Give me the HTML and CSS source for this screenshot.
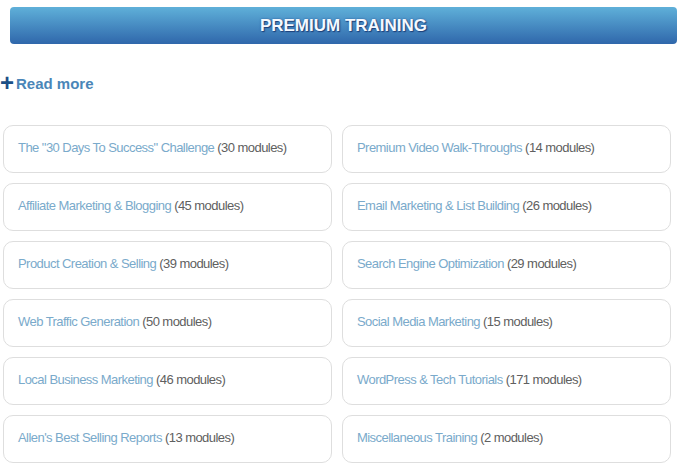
FILE: index.html
```html
<!doctype html>
<html lang="en">
    <head>
        <meta charset="UTF-8" />
        <title>Premium Training</title>
        <link rel="stylesheet" href="styles.css">
    </head>
    <body>
        <h2 class="banner">PREMIUM TRAINING</h2>

        <a class="read-more" href="#"><span class="plus">+</span>Read more</a>

        <!-- Course categories -->
        <ul class="courses">
            <li><a href="#">The "30 Days To Success" Challenge</a> (30 modules)</li>
            <li><a href="#">Premium Video Walk-Throughs</a> (14 modules)</li>
            <li><a href="#">Affiliate Marketing &amp; Blogging</a> (45 modules)</li>
            <li><a href="#">Email Marketing &amp; List Building</a> (26 modules)</li>
            <li><a href="#">Product Creation &amp; Selling</a> (39 modules)</li>
            <li><a href="#">Search Engine Optimization</a> (29 modules)</li>
            <li><a href="#">Web Traffic Generation</a> (50 modules)</li>
            <li><a href="#">Social Media Marketing</a> (15 modules)</li>
            <li><a href="#">Local Business Marketing</a> (46 modules)</li>
            <li><a href="#">WordPress &amp; Tech Tutorials</a> (171 modules)</li>
            <li><a href="#">Allen's Best Selling Reports</a> (13 modules)</li>
            <li><a href="#">Miscellaneous Training</a> (2 modules)</li>
        </ul>
    </body>
</html>
```
FILE: styles.css
```css
:root {
    --color-link: #7aaacb;
    --color-count: #606060;
    --color-border: #dedede;
    --color-read: #4a86b8;
    --color-plus: #1c4f86;
}

body {
    margin: 0;
    background: #fff;
    font-family: "Liberation Sans", Arial, sans-serif;
}

.banner {
    margin: 7px 8px 0 10px;
    height: 37px;
    line-height: 37px;
    border-radius: 4px;
    background: linear-gradient(#5fb0d9, #2f67ab);
    color: #f4f9ff;
    font-size: 17px;
    font-weight: bold;
    text-align: center;
    text-shadow: 1px 1px 1px #1d3f78, 0 0 2px #2a5597;
}

.read-more {
    display: flex;
    align-items: center;
    margin-top: 29px;
    height: 20px;
    color: var(--color-read);
    font-size: 15px;
    font-weight: bold;
    text-decoration: none;
}

.plus {
    color: var(--color-plus);
    font-size: 24px;
    margin-right: 2px;
    line-height: 20px;
}

.courses {
    list-style: none;
    margin: 32px 0 0 3px;
    padding: 0;
    width: 668px;
    display: grid;
    grid-template-columns: 329px 329px;
    gap: 10px;
}

.courses li {
    box-sizing: border-box;
    height: 48px;
    border: 1px solid var(--color-border);
    border-radius: 10px;
    padding: 0 14px 3px;
    display: flex;
    align-items: center;
    font-size: 13px;
    letter-spacing: -0.55px;
    color: var(--color-count);
    white-space: pre;
}

.courses a {
    color: var(--color-link);
    text-decoration: none;
}
```
